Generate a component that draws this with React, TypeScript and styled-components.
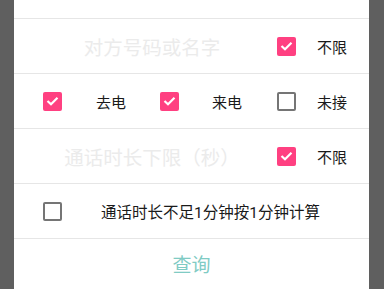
import React from "react";
import styled, { createGlobalStyle } from "styled-components";

const Global = createGlobalStyle`
  html, body { margin: 0; padding: 0; background: #5f5f5f; }
  body { font-family: Roboto, "Noto Sans CJK SC", sans-serif; }
`;

const Screen = styled.div`
  width: 384px;
  height: 289px;
  overflow: hidden;
  background: #5f5f5f;
  display: flex;
  justify-content: flex-start;
  padding-left: 14px;
  box-sizing: border-box;
`;

const Dialog = styled.div`
  width: 355px;
  background: #ffffff;
  display: flex;
  flex-direction: column;
`;

const TopStrip = styled.div`
  height: 18px;
  border-bottom: 1px solid #e6e6e6;
`;

const Row = styled.div<{ $pl?: number }>`
  height: 54px;
  border-bottom: 1px solid #e6e6e6;
  display: flex;
  align-items: center;
  padding-left: ${(p) => p.$pl ?? 0}px;
`;

const Placeholder = styled.div`
  flex: 1;
  text-align: center;
  color: #ebebeb;
  font-size: 19.5px;
  font-family: "Noto Sans CJK SC", sans-serif;
  padding-left: 13px;
`;

const Option = styled.div<{ $w?: number }>`
  display: flex;
  align-items: center;
  width: ${(p) => (p.$w ? `${p.$w}px` : "auto")};
  flex-shrink: 0;
`;

const Box = styled.div<{ $on: boolean }>`
  width: 19px;
  height: 19px;
  box-sizing: border-box;
  border-radius: 2px;
  background: ${(p) => (p.$on ? "#ff4081" : "transparent")};
  border: ${(p) => (p.$on ? "none" : "2px solid #757575")};
  display: flex;
  align-items: center;
  justify-content: center;
`;

const Label = styled.span<{ $gap: number; $size?: number }>`
  margin-left: ${(p) => p.$gap}px;
  font-size: ${(p) => p.$size ?? 15}px;
  color: #1a1a1a;
  font-family: Roboto, "Noto Sans CJK SC", sans-serif;
  white-space: nowrap;
`;

const RightPart = styled(Option)`
  width: 92px;
`;

const QueryButton = styled.div`
  flex: 1;
  display: flex;
  align-items: center;
  justify-content: center;
  color: #80cbc4;
  font-size: 19px;
  font-family: "Noto Sans CJK SC", sans-serif;
  padding-bottom: 2px;
`;

const Check: React.FC<{ on: boolean }> = ({ on }) => (
  <Box $on={on}>
    {on && (
      <svg width="13" height="10" viewBox="0 0 13 10">
        <path d="M1.5 5 L5 8.3 L11.5 1.8" fill="none" stroke="#fff" strokeWidth="2.2" />
      </svg>
    )}
  </Box>
);

export default function App() {
  return (
    <>
      <Global />
      <Screen>
        <Dialog>
          <TopStrip />
          <Row>
            <Placeholder>对方号码或名字</Placeholder>
            <RightPart>
              <Check on />
              <Label $gap={21}>不限</Label>
            </RightPart>
          </Row>
          <Row $pl={29}>
            <Option $w={117}>
              <Check on />
              <Label $gap={34}>去电</Label>
            </Option>
            <Option $w={117}>
              <Check on />
              <Label $gap={33}>来电</Label>
            </Option>
            <Option>
              <Check on={false} />
              <Label $gap={21}>未接</Label>
            </Option>
          </Row>
          <Row>
            <Placeholder>通话时长下限（秒）</Placeholder>
            <RightPart>
              <Check on />
              <Label $gap={21}>不限</Label>
            </RightPart>
          </Row>
          <Row $pl={29}>
            <Option>
              <Check on={false} />
              <Label $gap={39} $size={15.5}>通话时长不足1分钟按1分钟计算</Label>
            </Option>
          </Row>
          <QueryButton>查询</QueryButton>
        </Dialog>
      </Screen>
    </>
  );
}
